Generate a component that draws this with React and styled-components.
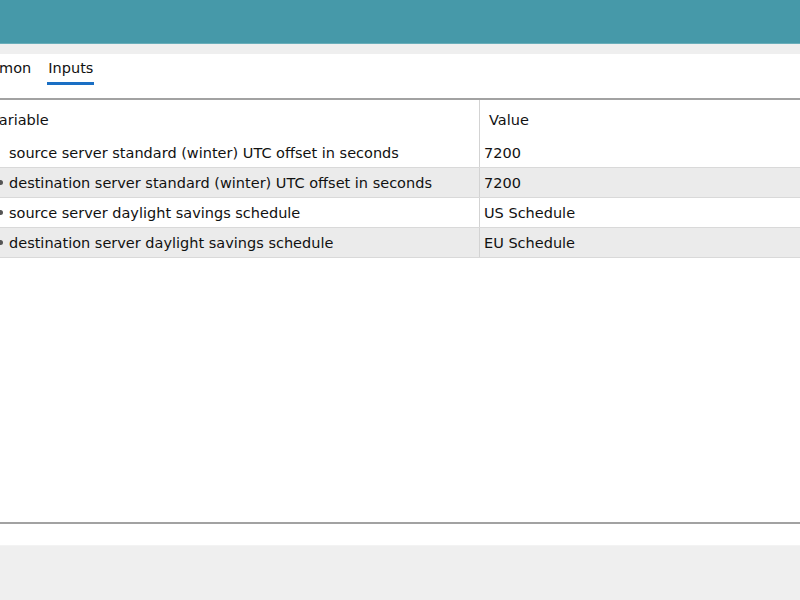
import React from "react";
import styled, { createGlobalStyle } from "styled-components";

const GlobalStyle = createGlobalStyle`
  html, body {
    margin: 0;
    padding: 0;
    background: #ffffff;
    overflow: hidden;
  }
  #root {
    width: 800px;
    height: 600px;
  }
`;

const Window = styled.div`
  width: 800px;
  height: 600px;
  display: flex;
  flex-direction: column;
  font-family: "DejaVu Sans", Verdana, sans-serif;
  font-size: 14.5px;
  color: #111111;
  overflow: hidden;
`;

const TitleBar = styled.div`
  height: 43px;
  background: #4699a9;
  border-bottom: 1px solid #6aaeba;
  flex-shrink: 0;
`;

const Strip = styled.div`
  height: ${(p) => p.h}px;
  background: #efefef;
  flex-shrink: 0;
`;

const Tabs = styled.div`
  height: 46px;
  display: flex;
  align-items: flex-start;
  gap: 15px;
  margin-left: -35px;
  padding-top: 5px;
  box-sizing: border-box;
  border-bottom: 2px solid #a2a2a2;
  flex-shrink: 0;
`;

const Tab = styled.div`
  padding: 0 1px 5px;
  line-height: 18px;
  border-bottom: 3px solid ${(p) => (p.active ? "#1a6fc4" : "transparent")};
`;

const Table = styled.div`
  flex: 1;
  display: flex;
  flex-direction: column;
  margin-left: -10px;
  border-bottom: 2px solid #a2a2a2;
`;

const Row = styled.div`
  display: grid;
  grid-template-columns: 490px 1fr;
  height: ${(p) => (p.header ? 38 : 29)}px;
  background: ${(p) => (p.shaded ? "#ebebeb" : "#ffffff")};
  border-bottom: ${(p) => (p.header ? "none" : "1px solid #d9d9d9")};
`;

const Cell = styled.div`
  display: flex;
  align-items: center;
  padding-left: ${(p) => p.pad}px;
  padding-top: ${(p) => (p.header ? 2 : 0)}px;
  white-space: nowrap;
  border-right: ${(p) => (p.first ? "1px solid #d3d3d3" : "none")};
`;

const Bullet = styled.span`
  width: 5px;
  height: 5px;
  flex-shrink: 0;
  border-radius: 50%;
  background: #555;
  margin-right: 6px;
  visibility: ${(p) => (p.show ? "visible" : "hidden")};
`;

const Footer = styled.div`
  height: 21px;
  background: #ffffff;
  border-bottom: 1px solid #f3f3f3;
  flex-shrink: 0;
`;

const rows = [
  { name: "source server standard (winter) UTC offset in seconds", value: "7200" },
  { name: "destination server standard (winter) UTC offset in seconds", value: "7200" },
  { name: "source server daylight savings schedule", value: "US Schedule" },
  { name: "destination server daylight savings schedule", value: "EU Schedule" },
];

const App = () => {
  return (
    <Window>
      <GlobalStyle />
      <TitleBar />
      <Strip h={10} />
      <Tabs>
        <Tab>Common</Tab>
        <Tab active>Inputs</Tab>
      </Tabs>
      <Table>
        <Row header>
          <Cell first header pad={0}>
            Variable
          </Cell>
          <Cell header pad={9}>
            Value
          </Cell>
        </Row>
        {rows.map((r, i) => (
          <Row key={r.name} shaded={i % 2 === 1}>
            <Cell first pad={8}>
              <Bullet show={i > 0} />
              {r.name}
            </Cell>
            <Cell pad={4}>{r.value}</Cell>
          </Row>
        ))}
      </Table>
      <Footer />
      <Strip h={54} />
    </Window>
  );
};

export default App;
